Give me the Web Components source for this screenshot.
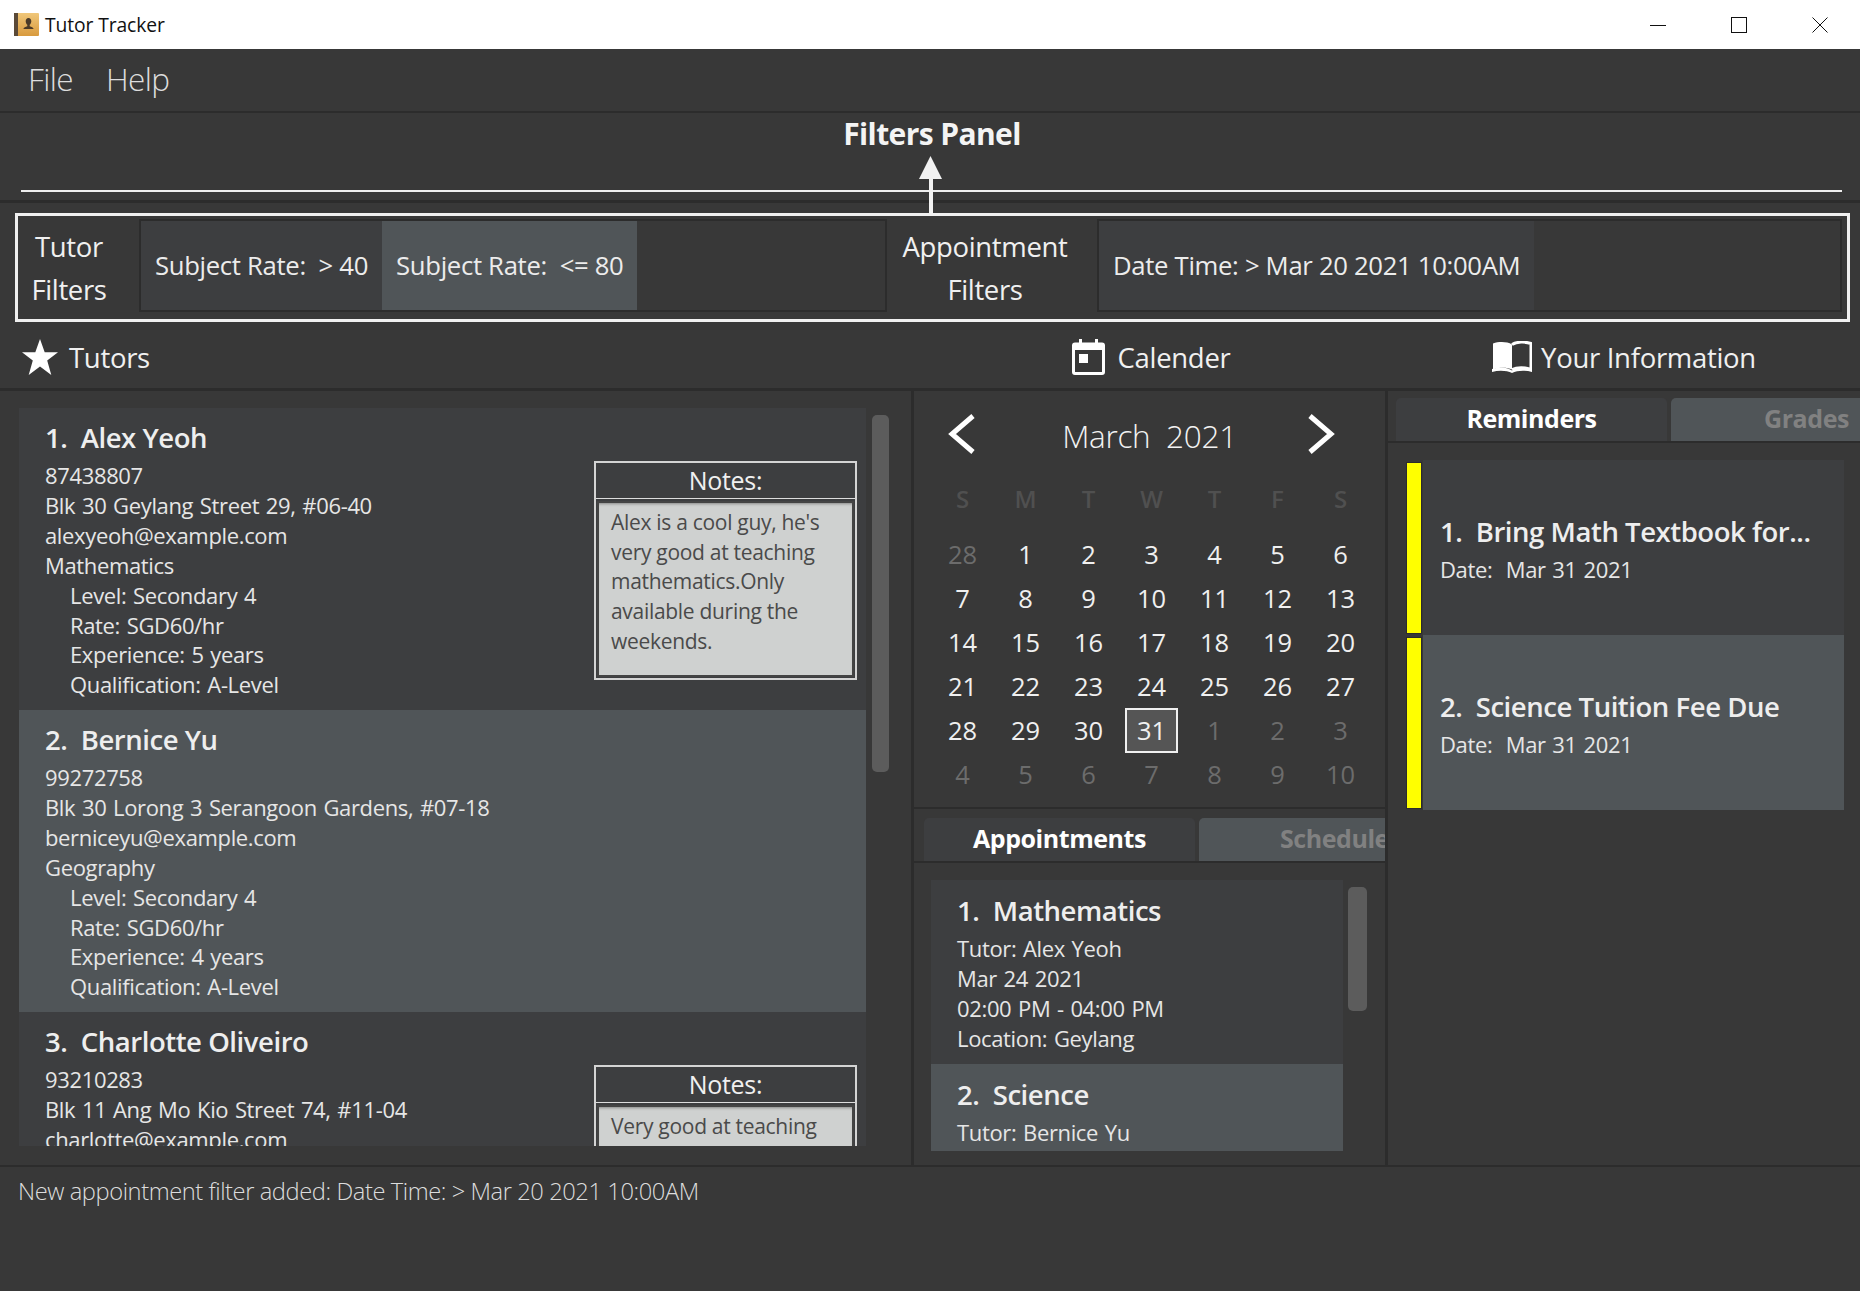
<!DOCTYPE html>
<html lang="en">
<head>
<meta charset="utf-8">
<title>Tutor Tracker</title>
<style>
  html, body { margin: 0; height: 100%; overflow: hidden; background: #383838; }
  body { font-family: "Open Sans", "Noto Sans", sans-serif; color: #e8e8e8; }
</style>
</head>
<body>
<tt-app></tt-app>

<script>
// small helper so every element below just gives its css + markup
class Base extends HTMLElement {
    constructor() {
        super();
        this.attachShadow({mode: 'open'});
    }
    connectedCallback() {
        this.shadowRoot.innerHTML = `<style>${this.css()}</style>${this.html()}`;
    }
    css() { return ':host{display:block}'; }
    html() { return '<slot></slot>'; }
}

const TITLE_CSS = `font-size:27.5px; font-weight:600; line-height:40px; margin-bottom:3px; letter-spacing:-.45px; color:#eee; white-space:pre;`;

class TitleBar extends Base {
    css() { return `
        :host { display:flex; align-items:center; height:49px; background:#fff; color:#111; flex:none; }
        .icon { margin-left:14px; width:25px; height:25px; }
        .name { margin-left:6px; font-size:19.3px; letter-spacing:-.1px; }
        .btns { margin-left:auto; display:flex; }
        .btn { width:81px; height:49px; display:flex; align-items:center; justify-content:center; }
    `; }
    html() { return `
        <svg class="icon" viewBox="0 0 25 25">
            <defs><linearGradient id="g" x1="0" y1="0" x2="0" y2="1"><stop offset="0" stop-color="#f0c77a"/><stop offset="1" stop-color="#d89a3e"/></linearGradient></defs>
            <rect x="0" y="1" width="25" height="23" rx="1" fill="url(#g)"/>
            <rect x="0" y="1" width="4" height="23" fill="#5b4a38"/>
            <path d="M14.5 6c1.8 0 2.8 1.4 2.8 3.2 0 1.5-.7 2.9-1.6 3.6v1.4c1.8.5 3.6 1.2 3.9 2.8H9.4c.3-1.6 2.1-2.3 3.9-2.8v-1.4c-.9-.7-1.6-2.1-1.6-3.6C11.7 7.4 12.7 6 14.5 6z" fill="#4a3a28"/>
        </svg>
        <span class="name">Tutor Tracker</span>
        <div class="btns">
            <div class="btn"><svg width="16" height="16"><path d="M0 8.5h16" stroke="#111"/></svg></div>
            <div class="btn"><svg width="16" height="16"><rect x=".5" y=".5" width="15" height="15" fill="none" stroke="#111"/></svg></div>
            <div class="btn"><svg width="16" height="16"><path d="M.5.5l15 15M15.5.5l-15 15" stroke="#111"/></svg></div>
        </div>
    `; }
}

class MenuBar extends Base {
    css() { return `
        :host { display:flex; align-items:center; box-sizing:border-box; height:64px; flex:none; padding:0 0 3px 28px;
                border-bottom:2px solid #2c2c2c; font-size:31.5px; font-weight:300; color:#ddd; letter-spacing:-.6px; }
        span { margin-right:33px; }
    `; }
    html() { return `<span>File</span><span>Help</span>`; }
}

class FiltersBanner extends Base {
    css() { return `
        :host { display:block; position:relative; height:87px; flex:none; border-bottom:3px solid #2c2c2c; }
        .title { text-align:center; font-size:30px; font-weight:700; color:#f4f4f4; line-height:40px; padding-top:1px;
                 padding-left:4px; letter-spacing:-.6px; }
        .rule { position:absolute; left:21px; right:18px; top:77px; height:2px; background:#eee; }
        /* the arrow sits over the rule and runs down into the box below */
        .arrow { position:absolute; left:919px; top:43px; z-index:2; }
    `; }
    html() { return `
        <div class="title">Filters Panel</div>
        <div class="rule"></div>
        <svg class="arrow" width="24" height="59" viewBox="0 0 24 59">
            <path d="M11.5 0L23 23H14V58H10V23H0z" fill="#f2f2f2"/>
        </svg>
    `; }
}

class FilterChip extends Base {
    css() { return `
        :host { display:flex; align-items:center; height:100%; box-sizing:border-box; padding:0 14px;
                background:#3d3e40; font-size:25.7px; color:#ececec; letter-spacing:-.32px; white-space:pre; }
        :host([selected]) { background:#505558; }
    `; }
}

class FilterGroup extends Base {
    css() { return `
        :host { display:flex; align-items:center; flex:none; height:100%; }
        .label { box-sizing:border-box; text-align:center; font-size:27.5px; font-weight:500; line-height:43px; flex:none;
                 letter-spacing:-.35px; color:#f0f0f0; width:var(--label); padding-right:var(--label-pad); }
        .list { display:flex; box-sizing:border-box; height:93px; margin-bottom:4px; border:2px solid #2c2c2c; width:var(--list); }
    `; }
    html() {
        const [a, b] = this.getAttribute('label').split(' ');
        return `<div class="label">${a}<br>${b}</div><div class="list"><slot></slot></div>`;
    }
}

class FilterBox extends Base {
    css() { return `
        :host { display:flex; align-items:center; box-sizing:border-box; flex:none; height:109px; margin:10px 10px 0 15px;
                border:3px solid #f0f0f0; padding-left:3px; }
    `; }
}

class SectionHeads extends Base {
    css() { return `
        :host { display:flex; box-sizing:border-box; height:69px; flex:none; padding-top:4px; border-bottom:3px solid #2c2c2c;
                font-size:27.5px; font-weight:500; color:#f0f0f0; letter-spacing:-.3px; }
        div { display:flex; align-items:center; }
        .a { width:914px; padding-left:22px; box-sizing:border-box; gap:11px; }
        .b { width:474px; justify-content:center; gap:13px; }
        .c { flex:1; justify-content:center; gap:9px; }
        svg { flex:none; }
    `; }
    html() { return `
        <div class="a">
            <svg width="36" height="36" viewBox="0 0 36 36"><path d="M18 0l4.7 13.3H36l-10.8 8.2L29.3 36 18 27.4 6.7 36l4.100-14.5L0 13.3h13.3z" fill="#fff"/></svg>
            <span>Tutors</span>
        </div>
        <div class="b">
            <svg width="33" height="36" viewBox="0 0 33 36"><path d="M7 0h3v3.5h13V0h3v3.5h4a3 3 0 0 1 3 3V33a3 3 0 0 1-3 3H3a3 3 0 0 1-3-3V6.5a3 3 0 0 1 3-3h4z M3 11v22h27V11z" fill="#fff" fill-rule="evenodd"/><rect x="7" y="15" width="9" height="9" fill="#fff"/></svg>
            <span>Calender</span>
        </div>
        <div class="c">
            <svg width="40" height="32" viewBox="0 0 40 32"><path d="M1 2.5C7 .5 15 .5 20 3.5v25C15 26 7 26 1 28.5z" fill="#fff"/><path d="M20 3.5C25 .5 33 .5 39 2.5v26c-6-2.5-14-2.5-19 0" fill="none" stroke="#fff" stroke-width="3"/><path d="M0 28c7-2.5 15-2 20 1.5 5-3.5 13-4 20-1.5v3c-7-2-15-1.5-20 1-5-2.5-13-3-20-1z" fill="#fff"/></svg>
            <span>Your Information</span>
        </div>
    `; }
}

class ScrollThumb extends Base {
    css() { return `
        :host { display:block; flex:none; width:var(--w); height:var(--h); margin:7px 0 0 var(--gap);
                background:#5c5c5c; border-radius:5px; }
    `; }
    html() { return ''; }
}

class InfoLine extends Base {
    css() { return `
        :host { display:block; line-height:29.9px; font-size:22px; letter-spacing:-.35px; word-spacing:1.3px; white-space:pre; color:#e6e6e6; }
        :host([indent]) { padding-left:25px; }
    `; }
}

class NotesBox extends Base {
    css() { return `
        :host { display:flex; flex-direction:column; box-sizing:border-box; flex:none; width:263px; height:219px;
                border:2px solid #d4d4d4; margin:53px 9px 0 0; }
        .head { height:35px; flex:none; text-align:center; line-height:35px; font-size:25px; letter-spacing:-.3px; color:#f0f0f0;
                border-bottom:1px solid #ddd; }
        .body { flex:1; margin:2px 1px 1px; border:2px solid #444; background:#cfd1d0; color:#4a4a4a; box-sizing:border-box;
                padding:5px 8px 0 12px; font-size:21px; letter-spacing:-.3px; line-height:29.7px;
                box-shadow:inset 0 3px 3px -2px #888; }
    `; }
    html() { return `<div class="head">Notes:</div><div class="body"><slot></slot></div>`; }
}

class TutorCard extends Base {
    css() { return `
        :host { display:flex; box-sizing:border-box; height:302px; background:#3d3e40; flex:none; justify-content:space-between; }
        :host([selected]) { background:#505558; }
        .info { padding:10px 0 0 26px; }
        .title { ${TITLE_CSS} }
    `; }
    html() { return `
        <div class="info">
            <div class="title">${this.getAttribute('index')}.  ${this.getAttribute('name')}</div>
            <slot name="info"></slot>
        </div>
        <slot name="notes"></slot>
    `; }
}

class AppointmentCard extends Base {
    css() { return `
        :host { display:block; box-sizing:border-box; height:184px; background:#3d3e40; padding:11px 0 0 26px; flex:none; }
        :host([selected]) { background:#505558; }
        .title { ${TITLE_CSS} }
    `; }
    html() { return `
        <div class="title">${this.getAttribute('index')}.  ${this.getAttribute('name')}</div>
        <slot></slot>
    `; }
}

class ReminderCard extends Base {
    css() { return `
        :host { display:flex; height:175px; background:#3d3e40; flex:none; margin-left:17px; }
        :host([selected]) { background:#505558; }
        .bar { flex:none; width:14px; height:170px; margin:2px 0 0 -17px; background:#ffff00; border:1px solid #2c2c2c; }
        .text { padding:52px 0 0 18px; }
        .title { ${TITLE_CSS} }
    `; }
    html() { return `
        <div class="bar"></div>
        <div class="text">
            <div class="title">${this.getAttribute('index')}.  ${this.getAttribute('name')}</div>
            <tt-line>Date:  Mar 31 2021</tt-line>
        </div>
    `; }
}

class TabRow extends Base {
    css() { return `
        :host { display:flex; flex:none; height:43px; padding-left:var(--pad,10px); gap:4px; border-bottom:2px solid #2c2c2c; overflow:hidden;
                font-size:25px; font-weight:700; letter-spacing:-.45px; }
        div { flex:none; width:271px; box-sizing:border-box; text-align:center; line-height:41px; border-radius:5px 5px 0 0; white-space:nowrap; }
        .on { background:#3d3e40; color:#fff; }
        .off { background:#505558; color:#818181; }
    `; }
    html() { return `<div class="on">${this.getAttribute('active')}</div><div class="off">${this.getAttribute('other')}</div>`; }
}

class MiniCalendar extends Base {
    css() { return `
        :host { display:block; flex:none; box-sizing:border-box; height:418px; border-bottom:2px solid #2c2c2c; }
        .head { display:grid; grid-template-columns:1fr auto 1fr; align-items:center; height:48px; padding-top:20px; }
        .prev { margin:-2px 0 0 34px; }
        .next { margin:-2px 50px 0 0; justify-self:end; }
        .month { font-size:31.5px; font-weight:300; color:#f2f2f2; letter-spacing:-.3px; white-space:pre; }
        .grid { display:grid; grid-template-columns:repeat(7, 63px); margin-left:17px; font-size:25.5px; text-align:center; color:#f0f0f0; }
        .dow { color:#505050; font-weight:600; height:44px; line-height:44px; margin:18px 0 11px; font-size:24px; }
        .day { height:44px; line-height:44px; }
        .day.dim { color:#6c6c6c; }
        .today { width:49px; height:41px; margin:0 auto; line-height:41px; background:#555; border:2px solid #f0f0f0; }
    `; }
    html() {
        const dow = ['S','M','T','W','T','F','S'].map(d => `<div class="dow">${d}</div>`).join('');
        let cells = `<div class="day dim">28</div>`;
        for (let d = 1; d <= 30; d++) cells += `<div class="day">${d}</div>`;
        cells += `<div class="day"><div class="today">31</div></div>`;
        [1,2,3,4,5,6,7,8,9,10].forEach(d => cells += `<div class="day dim">${d}</div>`);
        return `
            <div class="head">
                <svg class="prev" width="27" height="40" viewBox="0 0 27 40"><path d="M25 2L4 20l21 18" fill="none" stroke="#fff" stroke-width="5"/></svg>
                <div class="month">March  2021</div>
                <svg class="next" width="27" height="40" viewBox="0 0 27 40"><path d="M2 2l21 18L2 38" fill="none" stroke="#fff" stroke-width="5"/></svg>
            </div>
            <div class="grid">${dow}${cells}</div>
        `;
    }
}

class StatusBox extends Base {
    css() { return `
        :host { display:block; flex:1; box-sizing:border-box; border-top:2px solid #2c2c2c; padding:4px 0 0 18px;
                font-size:23.7px; font-weight:300; line-height:40px; letter-spacing:-.42px; color:#ddd; }
    `; }
}

class ClipList extends Base {
    // scrolling list cut off at its height, with the thumb next to it
    css() { return `
        :host { display:flex; flex:none; }
        .view { display:flex; flex-direction:column; overflow:hidden; width:var(--vw); height:var(--vh); }
    `; }
    html() { return `<div class="view"><slot></slot></div><slot name="thumb"></slot>`; }
}

class App extends Base {
    css() { return `
        :host { display:flex; flex-direction:column; width:1860px; height:1291px; background:#383838; }
        .main { display:flex; height:774px; flex:none; }
        .left { width:892px; flex:none; border-right:3px solid #2c2c2c; padding:17px 0 0 19px; }
        .mid { width:471px; flex:none; border-right:3px solid #2c2c2c; display:flex; flex-direction:column; }
        .mid tt-tabs { margin-top:9px; }
        .mid tt-clip { margin:17px 0 0 17px; }
        .right { flex:1; min-width:0; display:flex; flex-direction:column; }
        .right tt-tabs { margin-top:7px; --pad:8px; }
        .rem { width:438px; margin:17px 0 0 18px; display:flex; flex-direction:column; }
    `; }
    html() { return `
        <tt-titlebar></tt-titlebar>
        <tt-menubar></tt-menubar>
        <tt-banner></tt-banner>
        <tt-filterbox>
            <tt-filtergroup label="Tutor Filters" style="--label:118px;--label-pad:22px;--list:748px">
                <tt-chip>Subject Rate:  &gt; 40</tt-chip>
                <tt-chip selected>Subject Rate:  &lt;= 80</tt-chip>
            </tt-filtergroup>
            <tt-filtergroup label="Appointment Filters" style="--label:210px;--label-pad:14px;--list:745px">
                <tt-chip>Date Time: &gt; Mar 20 2021 10:00AM</tt-chip>
            </tt-filtergroup>
        </tt-filterbox>
        <tt-heads></tt-heads>
        <div class="main">
            <section class="left">
                <tt-clip style="--vw:847px;--vh:738px">
                    <tt-tutor index="1" name="Alex Yeoh">
                        <span slot="info">
                            <tt-line>87438807</tt-line>
                            <tt-line>Blk 30 Geylang Street 29, #06-40</tt-line>
                            <tt-line>alexyeoh@example.com</tt-line>
                            <tt-line>Mathematics</tt-line>
                            <tt-line indent>Level: Secondary 4</tt-line>
                            <tt-line indent>Rate: SGD60/hr</tt-line>
                            <tt-line indent>Experience: 5 years</tt-line>
                            <tt-line indent>Qualification: A-Level</tt-line>
                        </span>
                        <tt-notes slot="notes">Alex is a cool guy, he's very good at teaching mathematics.Only available during the weekends.</tt-notes>
                    </tt-tutor>
                    <tt-tutor index="2" name="Bernice Yu" selected>
                        <span slot="info">
                            <tt-line>99272758</tt-line>
                            <tt-line>Blk 30 Lorong 3 Serangoon Gardens, #07-18</tt-line>
                            <tt-line>berniceyu@example.com</tt-line>
                            <tt-line>Geography</tt-line>
                            <tt-line indent>Level: Secondary 4</tt-line>
                            <tt-line indent>Rate: SGD60/hr</tt-line>
                            <tt-line indent>Experience: 4 years</tt-line>
                            <tt-line indent>Qualification: A-Level</tt-line>
                        </span>
                    </tt-tutor>
                    <tt-tutor index="3" name="Charlotte Oliveiro">
                        <span slot="info">
                            <tt-line>93210283</tt-line>
                            <tt-line>Blk 11 Ang Mo Kio Street 74, #11-04</tt-line>
                            <tt-line>charlotte@example.com</tt-line>
                        </span>
                        <tt-notes slot="notes">Very good at teaching</tt-notes>
                    </tt-tutor>
                    <tt-thumb slot="thumb" style="--w:17px;--h:357px;--gap:6px"></tt-thumb>
                </tt-clip>
            </section>
            <section class="mid">
                <tt-calendar></tt-calendar>
                <tt-tabs active="Appointments" other="Schedule"></tt-tabs>
                <tt-clip style="--vw:412px;--vh:271px">
                    <tt-appt index="1" name="Mathematics">
                        <tt-line>Tutor: Alex Yeoh</tt-line>
                        <tt-line>Mar 24 2021</tt-line>
                        <tt-line>02:00 PM - 04:00 PM</tt-line>
                        <tt-line>Location: Geylang</tt-line>
                    </tt-appt>
                    <tt-appt index="2" name="Science" selected>
                        <tt-line>Tutor: Bernice Yu</tt-line>
                    </tt-appt>
                    <tt-thumb slot="thumb" style="--w:19px;--h:124px;--gap:5px"></tt-thumb>
                </tt-clip>
            </section>
            <section class="right">
                <tt-tabs active="Reminders" other="Grades"></tt-tabs>
                <div class="rem">
                    <tt-reminder index="1" name="Bring Math Textbook for..."></tt-reminder>
                    <tt-reminder index="2" name="Science Tuition Fee Due" selected></tt-reminder>
                </div>
            </section>
        </div>
        <tt-status>New appointment filter added: Date Time: &gt; Mar 20 2021 10:00AM</tt-status>
    `; }
}

// children first, so the app's markup upgrades straight away
customElements.define('tt-titlebar', TitleBar);
customElements.define('tt-menubar', MenuBar);
customElements.define('tt-banner', FiltersBanner);
customElements.define('tt-chip', FilterChip);
customElements.define('tt-filtergroup', FilterGroup);
customElements.define('tt-filterbox', FilterBox);
customElements.define('tt-heads', SectionHeads);
customElements.define('tt-thumb', ScrollThumb);
customElements.define('tt-line', InfoLine);
customElements.define('tt-notes', NotesBox);
customElements.define('tt-tutor', TutorCard);
customElements.define('tt-appt', AppointmentCard);
customElements.define('tt-reminder', ReminderCard);
customElements.define('tt-tabs', TabRow);
customElements.define('tt-calendar', MiniCalendar);
customElements.define('tt-status', StatusBox);
customElements.define('tt-clip', ClipList);
customElements.define('tt-app', App);
</script>
</body>
</html>
